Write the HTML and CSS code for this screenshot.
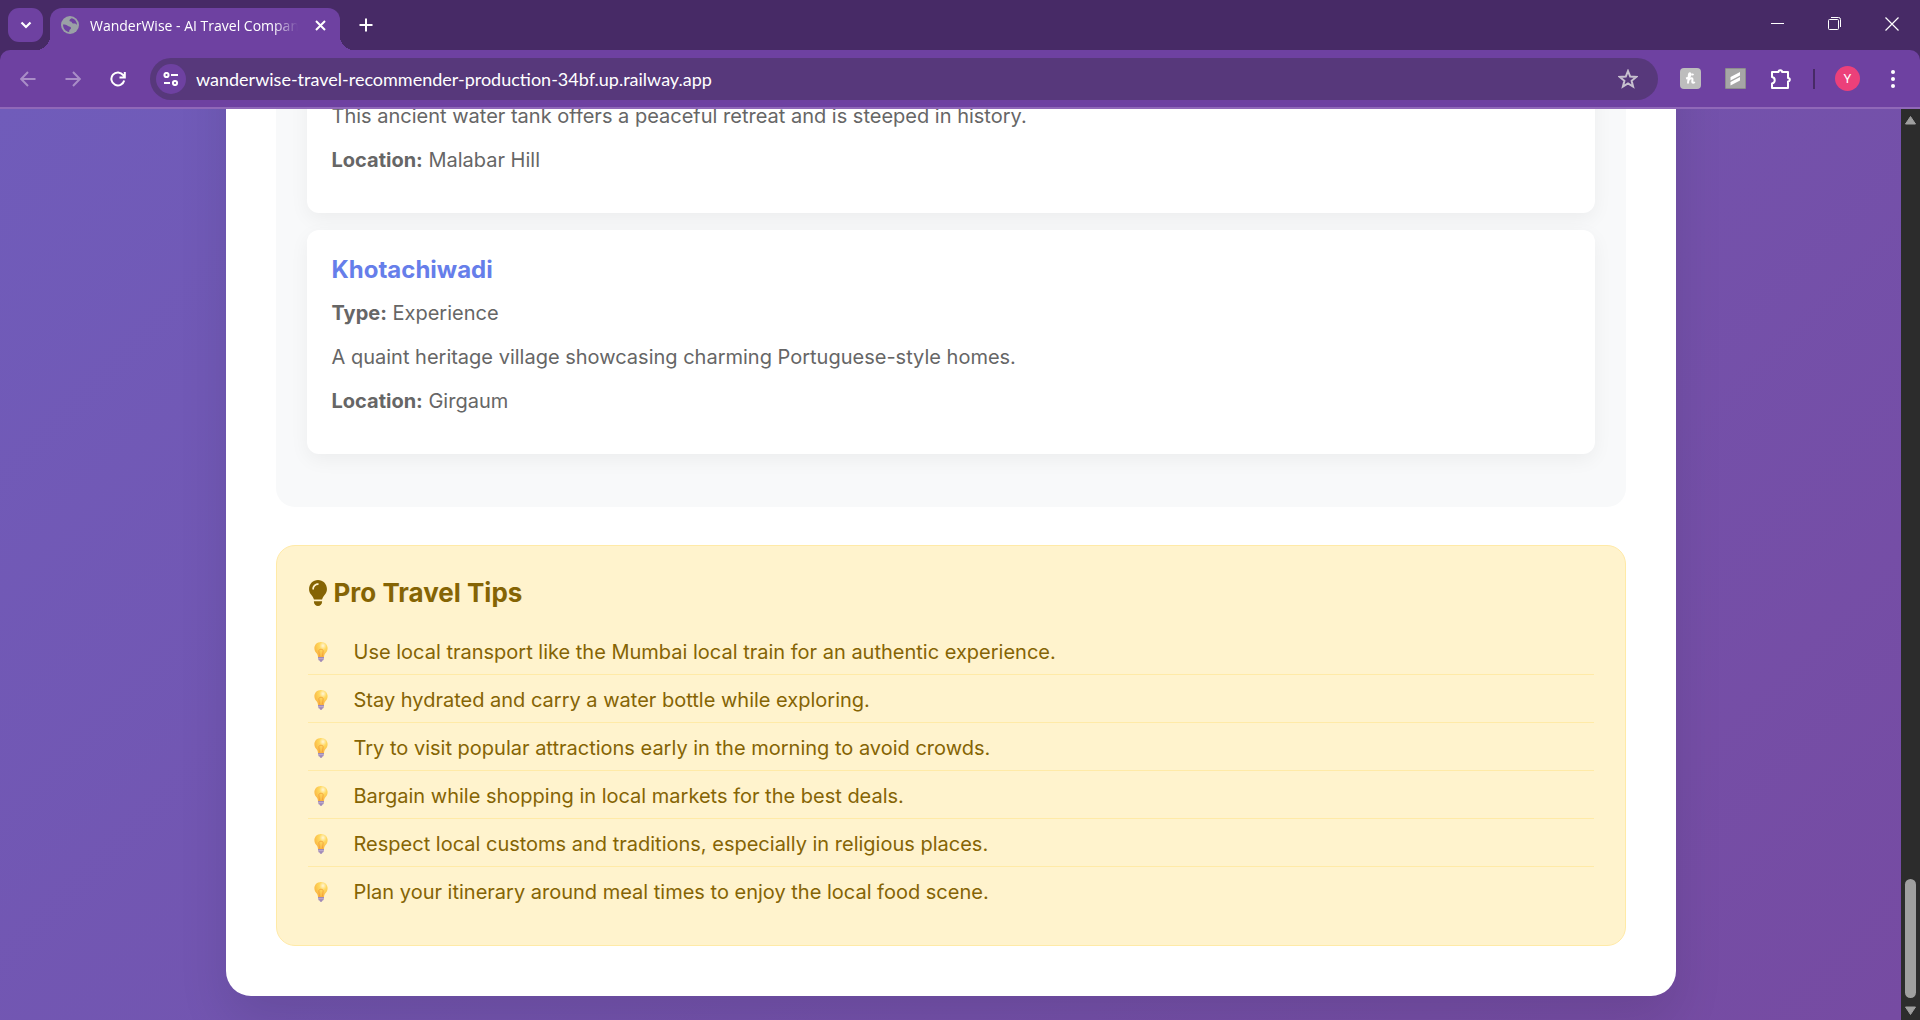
FILE: index.html
```html
<!DOCTYPE html>
<html lang="en">
<head>
  <meta charset="UTF-8" />
  <meta name="viewport" content="width=device-width, initial-scale=1.0" />
  <title>WanderWise - AI Travel Companion</title>
  <link rel="stylesheet" href="styles.css">
</head>
<body>
  <!-- shared light bulb, used once per tip -->
  <svg class="defs" width="0" height="0" aria-hidden="true">
    <defs>
      <radialGradient id="glass" cx="0.65" cy="0.25" r="0.8">
        <stop offset="0" stop-color="#fff6d8" />
        <stop offset="0.35" stop-color="#ffd85e" />
        <stop offset="1" stop-color="#f9b13e" />
      </radialGradient>
      <symbol id="bulb" viewBox="0 0 14 20">
        <path d="M7 0C3 0 .4 2.900 .4 6.300c0 2.300 1 3.700 2.200 5 .8.900 1.200 2 1.400 3.700h6c.2-1.700.6-2.800 1.400-3.700 1.200-1.300 2.200-2.700 2.200-5C13.600 2.900 11 0 7 0z" fill="url(#glass)" />
        <path d="M5.600 14.500L4.800 8.800c0-2 4.400-2 4.400 0l-.8 5.700" fill="none" stroke="#f29d38" stroke-width=".8" />
        <path d="M4 15h6v1.200l-.6.700.4.800-.9.900H8.400L7.900 19.700H6.100L5.600 18.600H5l-.8-.9.500-.8-.7-.7z" fill="#a08ab8" />
        <path d="M4.500 16.700h5" stroke="#cdbfdc" stroke-width=".7" />
      </symbol>
    </defs>
  </svg>

  <header class="browser">
    <div class="tab-strip">
      <button class="tab-search" aria-label="Search tabs">
        <svg width="12" height="8" viewBox="0 0 12 8"><path d="M1.500 1.500L6 6l4.500-4.500" fill="none" stroke="#fff" stroke-width="2.200" /></svg>
      </button>
      <div class="tab">
        <svg width="18" height="18" viewBox="0 0 18 18">
          <circle cx="9" cy="9" r="9" fill="#9aa0a6" />
          <path d="M2 8.500c2 0 3.500.3 5 1.400 1.500 1 3 .6 3 2.100 0 1.200-1.200 1.300-1.600 2.300-.2.700 0 1.300-.4 1.600C4.500 15.500 2 12.400 2 8.500zM10.500 2.200C9.800 3 9 3 8.600 4c-.3 1 .3 1.500 1.300 1.600 1 .1.800 1.200 1.600 1.700 1.200.700 2.500-.2 3.300.6.600.6 1 .7 1.200.4-.2-3-2.500-5.600-5.500-6.100z" fill="#6e41a1" />
        </svg>
        <span class="tab-title">WanderWise - AI Travel Companion</span>
        <button class="tab-close" aria-label="Close tab">
          <svg width="11" height="11" viewBox="0 0 11 11"><path d="M1 1l9 9M10 1l-9 9" stroke="#fff" stroke-width="2" /></svg>
        </button>
      </div>
      <button class="new-tab" aria-label="New tab">
        <svg width="14" height="14" viewBox="0 0 14 14"><path d="M7 .5v13M.5 7h13" stroke="#fff" stroke-width="2" /></svg>
      </button>
      <div class="window-controls">
        <button aria-label="Minimize"><svg width="14" height="14" viewBox="0 0 14 14"><path d="M0 6.500h13" stroke="#fff" /></svg></button>
        <button aria-label="Restore">
          <svg width="14" height="14" viewBox="0 0 14 14" fill="none" stroke="#fff"><rect x=".5" y="2.500" width="10" height="10" rx="1" /><path d="M3 .5h7.500a2 2 0 0 1 2 2V10" /></svg>
        </button>
        <button aria-label="Close"><svg width="14" height="14" viewBox="0 0 14 14"><path d="M.5.5l13 13M13.500.5l-13 13" stroke="#fff" stroke-width="1.200" /></svg></button>
      </div>
    </div>

    <div class="toolbar">
      <button class="tool dim" aria-label="Back">
        <svg width="16" height="16" viewBox="0 0 16 16"><path d="M15.500 8H1.500M8 1L1.200 8 8 15" /></svg>
      </button>
      <button class="tool dim" aria-label="Forward">
        <svg width="16" height="16" viewBox="0 0 16 16"><path d="M.5 8h14M8 1l6.800 7L8 15" /></svg>
      </button>
      <button class="tool" aria-label="Reload">
        <svg width="16" height="16" viewBox="0 0 16 16"><path d="M14.200 9.500A6.500 6.500 0 1 1 13.200 4.200L14.600 6M14.800 1v5.500H9.500" /></svg>
      </button>
      <div class="address">
        <button class="site-info" aria-label="View site information">
          <svg width="16" height="14" viewBox="0 0 16 14"><circle cx="3.500" cy="3" r="2.100" /><path d="M8 3h7M1 11h6" /><circle cx="12" cy="11" r="2.100" /></svg>
        </button>
        <input type="text" class="url" aria-label="Address" value="wanderwise-travel-recommender-production-34bf.up.railway.app">
        <button class="bookmark" aria-label="Bookmark this tab">
          <svg width="20" height="20" viewBox="0 0 20 20"><path d="M10 2l2.200 5.600 6 .4-4.600 3.800 1.500 5.900L10 14.500l-5.100 3.200 1.500-5.900L1.800 8l6-.4z" /></svg>
        </button>
      </div>
      <button class="tool" aria-label="Honey">
        <svg class="filled" width="21" height="21" viewBox="0 0 21 21">
          <rect width="21" height="21" rx="4" fill="#bdbdbd" />
          <path class="script" d="M6 10.500c2.500-.5 5-2.500 4.600-4.600-.4-1.300-1.800-.6-1.800 1.600L8 15.500M8.500 12.500c1-2.700 4.200-3.200 4-.9l-.3 2c0 1.700 1.500 1.500 2.500.3M12 6l1.500 1" />
        </svg>
      </button>
      <button class="tool" aria-label="Scribbr">
        <svg class="filled" width="21" height="21" viewBox="0 0 21 21">
          <rect width="21" height="21" rx="1" fill="#8d8d8d" />
          <rect x="1" y="1" width="19" height="19" fill="#a6a6a6" />
          <path d="M5.500 9L15 4v3.500L5.500 12.500zM5.500 14L15 9v3.500L5.500 17.500z" fill="#fff" />
        </svg>
      </button>
      <button class="tool" aria-label="Extensions">
        <svg width="22" height="22" viewBox="0 0 22 22"><path d="M2 4h6.500a1.800 1.800 0 0 1 3.600 0H18v6a1.800 1.800 0 0 1 0 3.600V20H2v-4.500a3.300 3.300 0 0 0 0-6.500z" stroke-linejoin="round" /></svg>
      </button>
      <span class="divider"></span>
      <button class="tool" aria-label="Profile"><span class="avatar">Y</span></button>
      <button class="tool" aria-label="Menu">
        <svg class="filled" width="4" height="18" viewBox="0 0 4 18"><circle cx="2" cy="2" r="2" /><circle cx="2" cy="9" r="2" /><circle cx="2" cy="16" r="2" /></svg>
      </button>
    </div>
  </header>

  <div class="viewport">
    <main class="page">
      <div class="container">
        <section class="attractions">
          <article class="card">
            <p>This ancient water tank offers a peaceful retreat and is steeped in history.</p>
            <p><strong>Location:</strong> Malabar Hill</p>
          </article>
          <article class="card">
            <h4>Khotachiwadi</h4>
            <p><strong>Type:</strong> Experience</p>
            <p>A quaint heritage village showcasing charming Portuguese-style homes.</p>
            <p><strong>Location:</strong> Girgaum</p>
          </article>
        </section>

        <section class="tips">
          <h3>
            <svg width="20" height="26" viewBox="0 0 384 512" fill="currentColor"><path d="M272 384c9.600-31.900 29.500-59.100 49.200-86.200 5.200-7.100 10.400-14.200 15.400-21.400 19.800-28.500 31.400-63 31.400-100.300C368 78.800 289.200 0 192 0S16 78.800 16 176c0 37.300 11.600 71.900 31.400 100.300 5 7.200 10.200 14.300 15.400 21.400 19.800 27.100 39.700 54.400 49.200 86.200zm-80 128c44.200 0 80-35.800 80-80v-16H112v16c0 44.200 35.800 80 80 80zM112 176c0 8.800-7.200 16-16 16s-16-7.200-16-16c0-61.900 50.100-112 112-112 8.800 0 16 7.200 16 16s-7.200 16-16 16c-44.200 0-80 35.800-80 80z" /></svg>
            Pro Travel Tips
          </h3>
          <ul>
            <li><svg width="14" height="20"><use href="#bulb" /></svg>Use local transport like the Mumbai local train for an authentic experience.</li>
            <li><svg width="14" height="20"><use href="#bulb" /></svg>Stay hydrated and carry a water bottle while exploring.</li>
            <li><svg width="14" height="20"><use href="#bulb" /></svg>Try to visit popular attractions early in the morning to avoid crowds.</li>
            <li><svg width="14" height="20"><use href="#bulb" /></svg>Bargain while shopping in local markets for the best deals.</li>
            <li><svg width="14" height="20"><use href="#bulb" /></svg>Respect local customs and traditions, especially in religious places.</li>
            <li><svg width="14" height="20"><use href="#bulb" /></svg>Plan your itinerary around meal times to enjoy the local food scene.</li>
          </ul>
        </section>
      </div>
    </main>

    <div class="scrollbar" aria-hidden="true">
      <svg width="13" height="10" viewBox="0 0 13 10"><path d="M6.500 1.500L11.500 9h-10z" /></svg>
      <span class="thumb"></span>
      <svg width="13" height="10" viewBox="0 0 13 10"><path d="M6.500 8.500L11.500 1h-10z" /></svg>
    </div>
  </div>
</body>
</html>
```
FILE: styles.css
```css
* {
  box-sizing: border-box;
  margin: 0;
  padding: 0;
}

body {
  height: 100vh;
  display: flex;
  flex-direction: column;
  overflow: hidden;
  font-family: Inter, sans-serif;
  background-color: #472a66;
}

.defs {
  position: absolute;
}

button {
  border: none;
  background: none;
  color: white;
  display: flex;
  align-items: center;
  justify-content: center;
  cursor: pointer;
}

/* Browser frame */
.browser {
  font-family: "Open Sans", sans-serif;
  color: white;
}

.tab-strip {
  height: 50px;
  display: flex;
  padding: 8px 0 0 8px;
}

.tab-search {
  width: 35px;
  height: 34px;
  margin-right: 7px;
  border-radius: 11px;
  background-color: #6e41a1;
}

.tab {
  position: relative;
  width: 290px;
  display: flex;
  align-items: center;
  padding: 0 8px 8px 11px;
  border-radius: 12px 12px 0 0;
  background-color: #6e41a1;
}

/* curved feet of the active tab */
.tab::before,
.tab::after {
  content: "";
  position: absolute;
  bottom: 0;
  width: 14px;
  height: 14px;
}

.tab::before {
  right: 100%;
  background: radial-gradient(circle at 0 0, transparent 14px, #6e41a1 14px);
}

.tab::after {
  left: 100%;
  background: radial-gradient(circle at 100% 0, transparent 14px, #6e41a1 14px);
}

.tab-title {
  flex: 1;
  margin: 0 10px 0 11px;
  overflow: hidden;
  white-space: nowrap;
  font-size: 14px;
  mask-image: linear-gradient(to right, black 88%, transparent);
}

.tab-close {
  width: 24px;
  height: 24px;
}

.new-tab {
  width: 40px;
  height: 34px;
  margin-left: 6px;
}

.window-controls {
  display: flex;
  margin: -8px 0 0 auto;
}

.window-controls button {
  width: 57px;
  height: 48px;
}

.toolbar {
  height: 59px;
  display: flex;
  align-items: center;
  padding: 0 5px;
  border-bottom: 2px solid #9068b8;
  border-radius: 10px 10px 0 0;
  background-color: #6e41a1;
}

.tool {
  width: 45px;
  height: 42px;
}

.toolbar svg {
  fill: none;
  stroke: white;
  stroke-width: 2;
}

.toolbar svg.filled {
  fill: white;
  stroke: none;
}

.toolbar .script {
  fill: none;
  stroke: white;
}

.toolbar .dim svg {
  stroke: #a98dc7;
}

.address {
  flex: 1;
  height: 42px;
  display: flex;
  align-items: center;
  margin: 0 10px;
  padding: 0 20px 0 6px;
  border-radius: 21px;
  background-color: #57387b;
}

.site-info {
  width: 30px;
  height: 30px;
  border-radius: 50%;
  background-color: #6e41a1;
}

.url {
  flex: 1;
  margin: 0 10px;
  border: none;
  outline: none;
  background: none;
  color: white;
  font-family: Lato, sans-serif;
  font-size: 18px;
}

.toolbar .bookmark svg {
  stroke: #c7c0cf;
}

.divider {
  width: 2px;
  height: 20px;
  margin: 0 10px;
  background-color: #472a66;
}

.avatar {
  width: 25px;
  height: 25px;
  border-radius: 50%;
  background-color: #ec407a;
  font-family: Roboto, sans-serif;
  font-size: 13px;
  line-height: 25px;
}

/* Page */
.viewport {
  flex: 1;
  min-height: 0;
  display: flex;
}

.page {
  flex: 1;
  display: flex;
  flex-direction: column;
  align-items: center;
  justify-content: flex-end;
  padding: 0 25px 24px;
  overflow: hidden;
  background: linear-gradient(135deg, #705cba, #764ba2);
}

.container {
  width: 100%;
  max-width: 1450px;
  padding: 50px;
  border-radius: 25px;
  background-color: white;
  box-shadow: 0 25px 50px rgba(0, 0, 0, 0.1);
}

.attractions {
  margin-bottom: 38px;
  padding: 31px 31px 36px;
  border-radius: 19px;
  background-color: #f8f9fa;
}

.card {
  margin-bottom: 17px;
  padding: 25px;
  border-radius: 12px;
  background-color: white;
  box-shadow: 0 6px 19px rgba(0, 0, 0, 0.05);
}

.card h4 {
  margin-bottom: 13px;
  color: #667eea;
  font-size: 24px;
  line-height: 29px;
}

.card p {
  margin-bottom: 12px;
  color: #666;
  font-size: 20px;
  line-height: 32px;
}

.tips {
  padding: 31px 31px 30px;
  border: 1px solid #ffeaa7;
  border-radius: 19px;
  background-color: #fff3cd;
  color: #856404;
}

.tips h3 {
  display: flex;
  align-items: center;
  gap: 6px;
  margin-bottom: 19px;
  font-size: 26px;
  line-height: 31px;
}

.tips ul {
  list-style: none;
}

.tips li {
  display: flex;
  align-items: center;
  gap: 26px;
  height: 48px;
  padding: 2px 0 0 6px;
  border-bottom: 1px solid #ffeaa7;
  font-size: 20px;
}

.tips li:last-child {
  border-bottom: none;
}

.scrollbar {
  width: 19px;
  display: flex;
  flex-direction: column;
  align-items: center;
  padding: 6px 0 4px;
  background-color: #2c2c2c;
}

.scrollbar svg {
  fill: #9f9f9f;
  stroke: #9f9f9f;
  stroke-linejoin: round;
}

.thumb {
  width: 11px;
  height: 119px;
  margin: auto 0 8px;
  border-radius: 6px;
  background-color: #9f9f9f;
}
```
